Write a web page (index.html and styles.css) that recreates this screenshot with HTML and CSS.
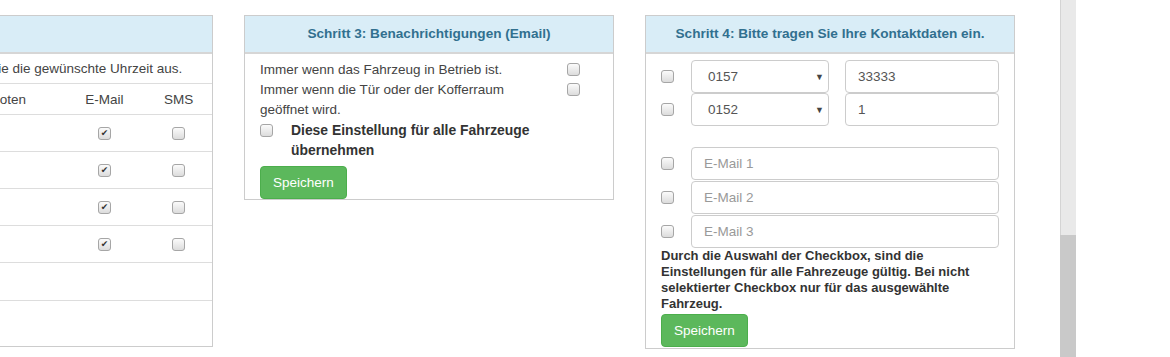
FILE: index.html
```html
<!DOCTYPE html>
<html lang="de">
<head>
    <meta charset="UTF-8">
    <meta name="viewport" content="width=device-width, initial-scale=1.0">
    <title>Benachrichtigungen</title>
    <link rel="stylesheet" href="styles.css">
</head>
<body>
    <div class="screen">
        <div class="page">
            <div class="steps">
                <!-- Schritt 2: Uhrzeiten -->
                <section class="panel panel-times">
                    <div class="panel-heading heading-left">Schritt 2</div>
                    <table class="times">
                        <colgroup>
                            <col class="c-time">
                            <col class="c-state">
                            <col class="c-mail">
                            <col class="c-sms">
                        </colgroup>
                        <tr class="intro">
                            <td colspan="4">Bitte wählen Sie die gewünschte Uhrzeit aus.</td>
                        </tr>
                        <tr class="head">
                            <td>Uhrzeit</td>
                            <td>Verboten</td>
                            <td class="mid">E-Mail</td>
                            <td class="mid">SMS</td>
                        </tr>
                        <tr>
                            <td>06 - 12</td><td></td>
                            <td class="mid"><input type="checkbox" checked></td>
                            <td class="mid"><input type="checkbox"></td>
                        </tr>
                        <tr>
                            <td>12 - 18</td><td></td>
                            <td class="mid"><input type="checkbox" checked></td>
                            <td class="mid"><input type="checkbox"></td>
                        </tr>
                        <tr>
                            <td>18 - 24</td><td></td>
                            <td class="mid"><input type="checkbox" checked></td>
                            <td class="mid"><input type="checkbox"></td>
                        </tr>
                        <tr>
                            <td>00 - 06</td><td></td>
                            <td class="mid"><input type="checkbox" checked></td>
                            <td class="mid"><input type="checkbox"></td>
                        </tr>
                        <tr class="row-empty"><td></td><td></td><td></td><td></td></tr>
                        <tr class="row-last"><td></td><td></td><td></td><td></td></tr>
                    </table>
                </section>

                <!-- Schritt 3 -->
                <section class="panel">
                    <div class="panel-heading">Schritt 3: Benachrichtigungen (Email)</div>
                    <div class="panel-body">
                        <div class="option">
                            <span>Immer wenn das Fahrzeug in Betrieb ist.</span>
                            <input type="checkbox">
                        </div>
                        <div class="option">
                            <span>Immer wenn die Tür oder der Kofferraum geöffnet wird.</span>
                            <input type="checkbox">
                        </div>
                        <label class="apply-all">
                            <input type="checkbox">
                            <span>Diese Einstellung für alle Fahrzeuge übernehmen</span>
                        </label>
                        <button class="btn-save">Speichern</button>
                    </div>
                </section>

                <!-- Schritt 4 -->
                <section class="panel">
                    <div class="panel-heading">Schritt 4: Bitte tragen Sie Ihre Kontaktdaten ein.</div>
                    <div class="panel-body body-contact">
                        <div class="phones">
                            <div class="contact-row">
                                <span class="check-cell"><input type="checkbox"></span>
                                <div class="select"><span>0157</span><span class="arrow">▼</span></div>
                                <input class="field number" type="text" value="33333">
                            </div>
                            <div class="contact-row">
                                <span class="check-cell"><input type="checkbox"></span>
                                <div class="select"><span>0152</span><span class="arrow">▼</span></div>
                                <input class="field number" type="text" value="1">
                            </div>
                        </div>
                        <div class="mails">
                            <div class="contact-row">
                                <span class="check-cell"><input type="checkbox"></span>
                                <input class="field" type="text" placeholder="E-Mail 1">
                            </div>
                            <div class="contact-row">
                                <span class="check-cell"><input type="checkbox"></span>
                                <input class="field" type="text" placeholder="E-Mail 2">
                            </div>
                            <div class="contact-row">
                                <span class="check-cell"><input type="checkbox"></span>
                                <input class="field" type="text" placeholder="E-Mail 3">
                            </div>
                        </div>
                        <p class="hint">Durch die Auswahl der Checkbox, sind die Einstellungen für alle Fahrezeuge gültig. Bei nicht selektierter Checkbox nur für das ausgewählte Fahrzeug.</p>
                        <button class="btn-save">Speichern</button>
                    </div>
                </section>
            </div>
        </div>
        <div class="scrollbar"><div class="thumb"></div></div>
    </div>
</body>
</html>
```

FILE: styles.css
```css
body {
    margin: 0;
    font-family: "Liberation Sans", Arial, sans-serif;
    font-size: 13.5px;
    color: #444;
    background-color: #fff;
}
.screen {
    display: flex;
    height: 100vh;
    overflow: hidden;
}
.page {
    width: 1060px;
    overflow: hidden;
}
.steps {
    display: flex;
    align-items: flex-start;
    gap: 31px;
    margin-left: -104px;
    padding-top: 15px;
}
.panel {
    box-sizing: border-box;
    width: 370px;
    flex: none;
    border: 1px solid #ccc;
    background-color: #fff;
}
.panel-times {
    width: 317px;
}
.panel-heading {
    height: 36px;
    line-height: 36px;
    background-color: #d9edf7;
    border-bottom: 2px solid #d6d6d6;
    color: #31708f;
    font-size: 13.6px;
    font-weight: bold;
    text-align: center;
}
.heading-left {
    text-align: left;
    padding-left: 15px;
}
.panel-body {
    padding: 6px 15px 0;
}
.body-contact {
    padding-bottom: 1px;
}

/* Tabelle Uhrzeiten */
.times {
    width: 100%;
    border-collapse: collapse;
    table-layout: fixed;
}
.c-time { width: 67px; }
.c-state { width: 100px; }
.c-mail { width: 81px; }
.c-sms { width: 67px; }
.times td {
    padding: 0 8px;
    height: 36px;
    border-bottom: 1px solid #ddd;
    white-space: nowrap;
}
.times .intro td {
    height: 29px;
    padding-left: 15px;
}
.times .head td {
    height: 30px;
}
.times .row-empty td {
    height: 37px;
}
.times .row-last td {
    height: 45px;
    border-bottom: none;
}
.times .mid {
    text-align: center;
}
.times td input {
    vertical-align: middle;
}

/* Checkboxen */
input[type="checkbox"] {
    appearance: none;
    -webkit-appearance: none;
    box-sizing: border-box;
    width: 13px;
    height: 13px;
    margin: 0;
    border: 1px solid #a6a6a6;
    border-radius: 3px;
    background: linear-gradient(#fbfbfb, #dcdcdc);
}
input[type="checkbox"]:checked::after {
    content: "✔";
    display: block;
    font-family: "DejaVu Sans", sans-serif;
    font-size: 9px;
    line-height: 11px;
    text-align: center;
    color: #333;
}

/* Schritt 3 */
.option {
    display: grid;
    grid-template-columns: 1fr 50px;
    line-height: 20px;
}
.option input {
    justify-self: center;
    margin-top: 3px;
}
.apply-all {
    display: flex;
    align-items: flex-start;
    font-weight: bold;
    font-size: 13.9px;
    line-height: 20px;
    color: #333;
}
.apply-all input {
    margin: 4px 18px 0 0;
    flex: none;
}
.apply-all span {
    width: 265px;
}
.btn-save {
    display: block;
    box-sizing: border-box;
    height: 33px;
    margin-top: 6px;
    padding: 0 12px;
    border: 1px solid #4cae4c;
    border-radius: 4px;
    background-color: #5cb85c;
    color: #fff;
    font-family: inherit;
    font-size: 13.5px;
}

/* Schritt 4 */
.phones {
    margin-bottom: 21px;
}
.mails {
    display: flex;
    flex-direction: column;
    gap: 1px;
}
.contact-row {
    display: flex;
    align-items: center;
    height: 33px;
}
.check-cell {
    width: 30px;
    flex: none;
    display: flex;
}
.select,
.field {
    box-sizing: border-box;
    height: 33px;
    border: 1px solid #ccc;
    border-radius: 4px;
    background-color: #fff;
    font-family: inherit;
    font-size: 13.5px;
    color: #555;
}
.select {
    width: 138px;
    flex: none;
    display: flex;
    align-items: center;
    justify-content: space-between;
    padding: 0 4px 0 16px;
    margin-right: 16px;
}
.select .arrow {
    font-size: 9px;
    color: #444;
}
.field {
    flex: 1;
    min-width: 0;
    padding: 0 12px;
    outline: none;
}
.field::placeholder {
    color: #999;
}
.hint {
    margin: 0;
    font-size: 13px;
    font-weight: bold;
    line-height: 16px;
    color: #333;
}
.panel-body .hint + .btn-save {
    margin-top: 2px;
}

/* Scrollbalken */
.scrollbar {
    width: 16px;
    flex: none;
    display: flex;
    flex-direction: column;
    justify-content: flex-end;
    background-color: #e9e9e9;
    box-shadow: inset 1px 0 0 #d4d4d4;
}
.thumb {
    height: 122px;
    background-color: #c9c9c9;
}
```
